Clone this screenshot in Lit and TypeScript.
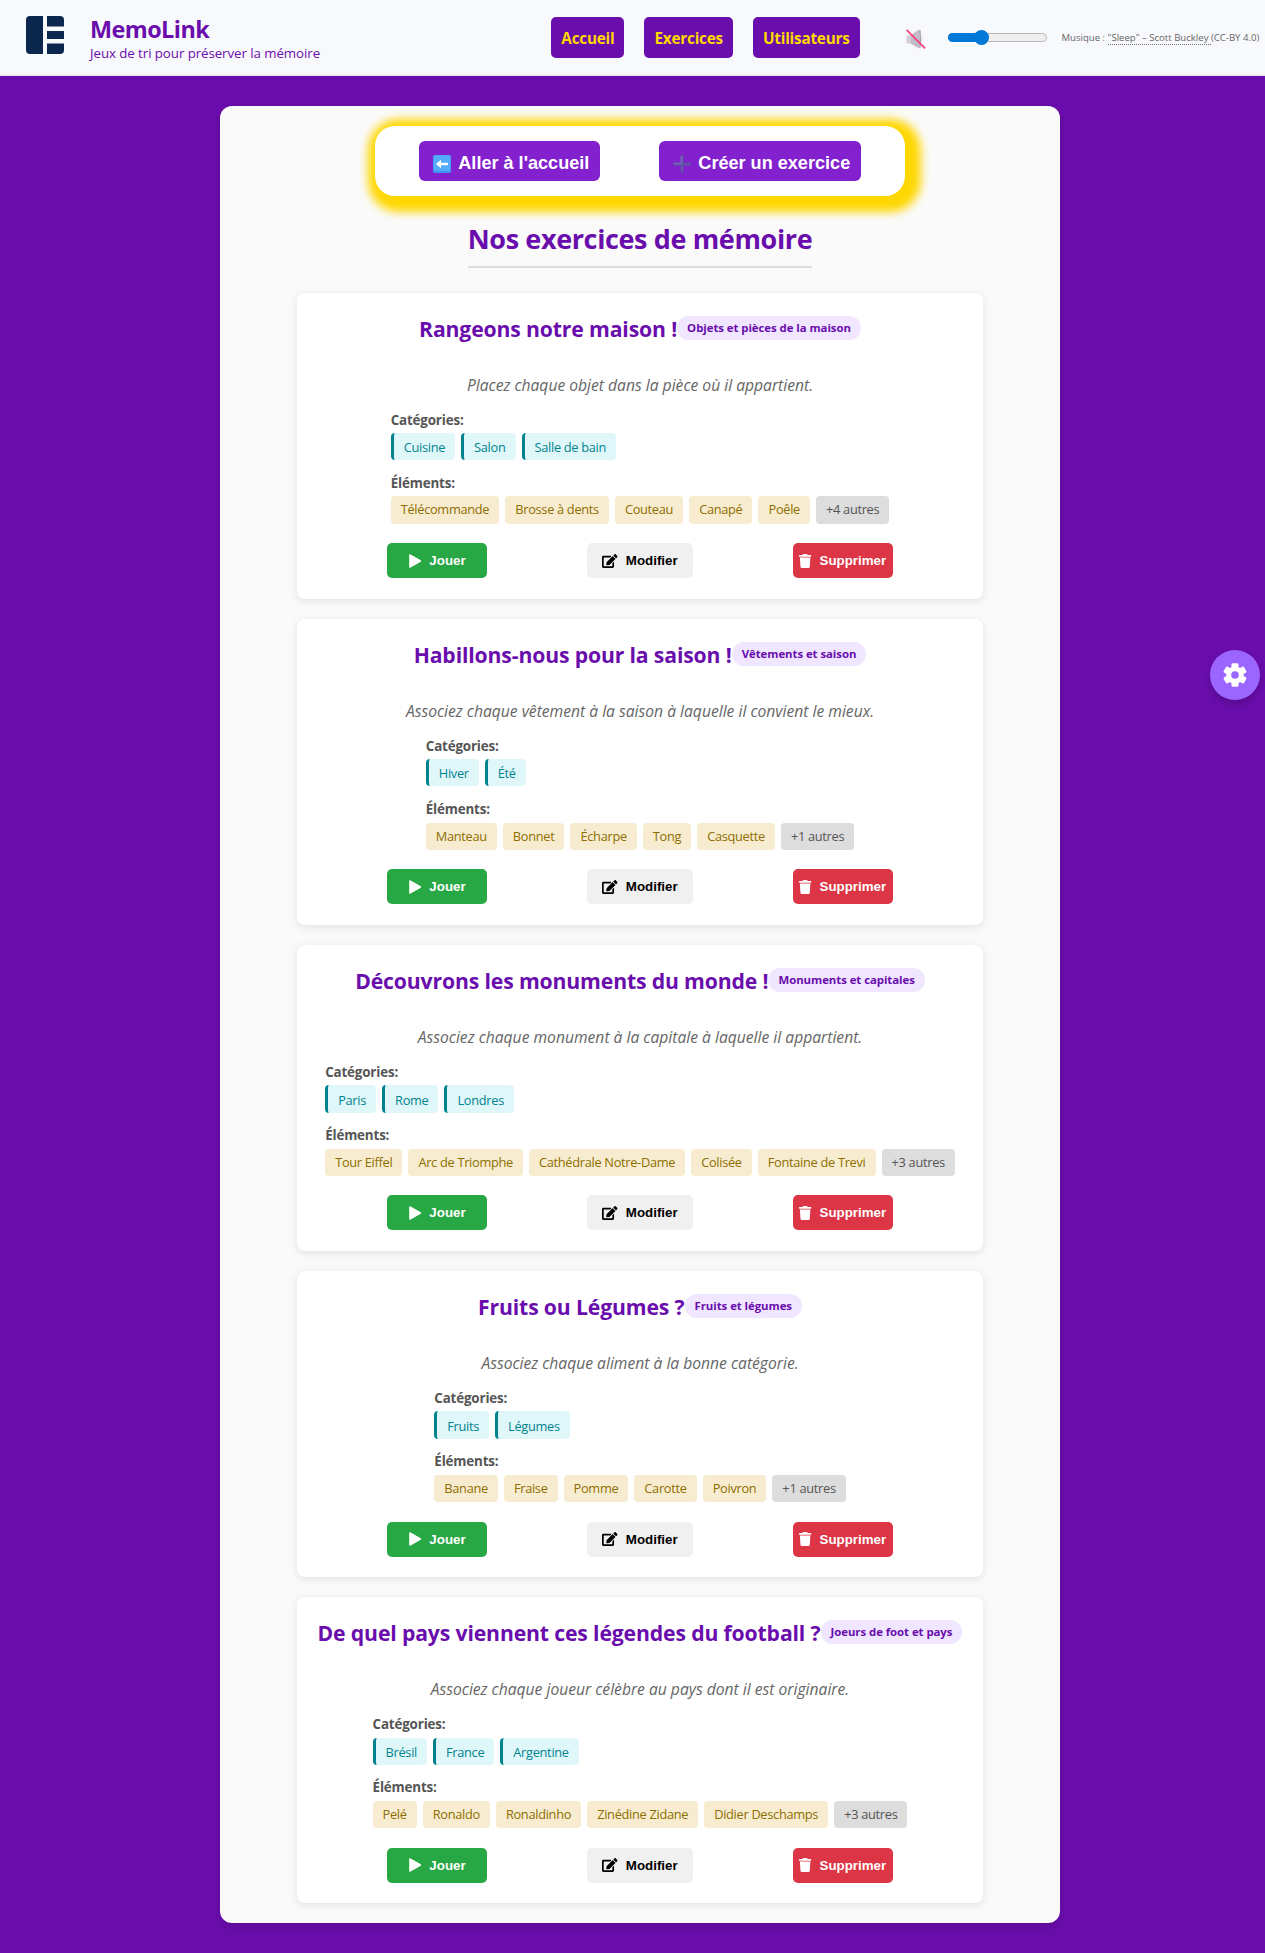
import { LitElement, html, css } from "lit";
import { customElement, property } from "lit/decorators.js";

interface Exercise {
  title: string;
  theme: string;
  description: string;
  categories: string[];
  items: string[];
  more: number;
}

const EXERCISES: Exercise[] = [
  {
    title: "Rangeons notre maison !",
    theme: "Objets et pièces de la maison",
    description: "Placez chaque objet dans la pièce où il appartient.",
    categories: ["Cuisine", "Salon", "Salle de bain"],
    items: ["Télécommande", "Brosse à dents", "Couteau", "Canapé", "Poêle"],
    more: 4,
  },
  {
    title: "Habillons-nous pour la saison !",
    theme: "Vêtements et saison",
    description: "Associez chaque vêtement à la saison à laquelle il convient le mieux.",
    categories: ["Hiver", "Été"],
    items: ["Manteau", "Bonnet", "Écharpe", "Tong", "Casquette"],
    more: 1,
  },
  {
    title: "Découvrons les monuments du monde !",
    theme: "Monuments et capitales",
    description: "Associez chaque monument à la capitale à laquelle il appartient.",
    categories: ["Paris", "Rome", "Londres"],
    items: ["Tour Eiffel", "Arc de Triomphe", "Cathédrale Notre-Dame", "Colisée", "Fontaine de Trevi"],
    more: 3,
  },
  {
    title: "Fruits ou Légumes ?",
    theme: "Fruits et légumes",
    description: "Associez chaque aliment à la bonne catégorie.",
    categories: ["Fruits", "Légumes"],
    items: ["Banane", "Fraise", "Pomme", "Carotte", "Poivron"],
    more: 1,
  },
  {
    title: "De quel pays viennent ces légendes du football ?",
    theme: "Joeurs de foot et pays",
    description: "Associez chaque joueur célèbre au pays dont il est originaire.",
    categories: ["Brésil", "France", "Argentine"],
    items: ["Pelé", "Ronaldo", "Ronaldinho", "Zinédine Zidane", "Didier Deschamps"],
    more: 3,
  },
];

const logoIcon = html`<svg class="logo" width="38" height="38" viewBox="0 0 38 38" fill="#0c274e">
  <path d="M4 0H17V38H4a4 4 0 0 1-4-4V4a4 4 0 0 1 4-4Z"/>
  <path d="M21 0H34a4 4 0 0 1 4 4V10.5H21Z"/>
  <path d="M21 15H38V23H21Z"/>
  <path d="M21 27.500H38V34a4 4 0 0 1-4 4H21Z"/>
</svg>`;

const mutedIcon = html`<svg class="muted" width="20" height="20" viewBox="0 0 20 20">
  <path d="M.5 6.5 5 6 13 .8 14.5 1V19l-1.500.2L5 14.800.5 14.300Z" fill="#d3ccd8"/>
  <path d="M5 6 13 .8V19.200L5 14.800Z" fill="#c3bbca"/>
  <path d="M14.500 1.500Q16 10 14.500 18.500L13.500 19V1Z" fill="#aaa3b0"/>
  <path d="M15.500 7Q17.800 10 15.500 13Z" fill="#ddd6e2"/>
  <path d="M.6.9 19.100 19.400" stroke="#f8417a" stroke-width="1.700"/>
</svg>`;

const backIcon = html`<svg width="18" height="18" viewBox="0 0 18 18">
  <rect width="18" height="18" rx="1.800" fill="#3d94ee"/>
  <rect x=".6" y=".3" width="16.800" height="15.500" rx="1.500" fill="#55aafa"/>
  <path d="M3 9 8 4.800V7.800H15V10.200H8V13.200Z" fill="#fff"/>
</svg>`;

const plusIcon = html`<svg width="18" height="18" viewBox="0 0 18 18">
  <path d="M7.700.3H10.400V7.700H17.700V10.400H10.400V17.700H7.700V10.400H.3V7.700H7.700Z" fill="#6155a5"/>
  <path d="M8.200.8V8.300H.8" fill="none" stroke="#8479bd" stroke-width=".9"/>
</svg>`;

const playIcon = html`<svg width="12.500" height="14" viewBox="0 0 12.500 14">
  <path d="M1.200.3Q.2-.2.200 1V13Q.2 14.200 1.200 13.700L11.800 7.700Q12.700 7 11.800 6.300Z" fill="currentColor"/>
</svg>`;

const editIcon = html`<svg width="15.500" height="14" viewBox="0 0 576 512" fill="currentColor">
  <path d="M402.600 83.200l90.200 90.200c3.800 3.800 3.800 10 0 13.800L274.400 405.600l-92.800 10.300c-12.400 1.400-22.900-9.100-21.500-21.500l10.300-92.800L388.800 83.200c3.800-3.800 10-3.800 13.800 0zm162-22.900l-48.800-48.800c-15.200-15.200-39.900-15.200-55.200 0l-35.400 35.400c-3.800 3.800-3.800 10 0 13.800l90.200 90.200c3.800 3.800 10 3.800 13.800 0l35.400-35.400c15.200-15.300 15.200-40 0-55.200zM384 346.200V448H64V128h229.800c3.200 0 6.200-1.300 8.500-3.500l40-40c7.600-7.600 2.200-20.500-8.500-20.500H48C21.500 64 0 85.500 0 112v352c0 26.500 21.500 48 48 48h352c26.500 0 48-21.500 48-48V306.200c0-10.700-12.900-16-20.500-8.500l-40 40c-2.200 2.300-3.500 5.300-3.500 8.500z"/>
</svg>`;

const trashIcon = html`<svg width="12.250" height="14" viewBox="0 0 448 512" fill="currentColor">
  <path d="M432 32H312l-9.400-18.700A24 24 0 0 0 281.100 0H166.800a23.700 23.700 0 0 0-21.400 13.300L136 32H16A16 16 0 0 0 0 48v32a16 16 0 0 0 16 16h416a16 16 0 0 0 16-16V48a16 16 0 0 0-16-16zM53.200 467a48 48 0 0 0 47.900 45h245.800a48 48 0 0 0 47.900-45L416 128H32z"/>
</svg>`;

const gearIcon = html`<svg width="24" height="24" viewBox="-12 -12 24 24" fill="#fff">
  <circle r="8.700"/>
  <rect x="-3.500" y="-11.800" width="7" height="23.600" rx="1.400"/>
  <rect x="-3.500" y="-11.800" width="7" height="23.600" rx="1.400" transform="rotate(60)"/>
  <rect x="-3.500" y="-11.800" width="7" height="23.600" rx="1.400" transform="rotate(120)"/>
  <circle r="3.800" fill="#9b66ff"/>
</svg>`;

@customElement("exercise-card")
export class ExerciseCard extends LitElement {
  @property({ attribute: false }) exercise!: Exercise;

  static styles = css`
    :host {
      display: flex;
      flex-direction: column;
      align-items: center;
      box-sizing: border-box;
      width: 686px;
      height: 306px;
      padding: 20px 0;
      border-radius: 8px;
      background: #fff;
      box-shadow: 0 2px 8px rgba(0, 0, 0, 0.1);
      white-space: nowrap;
    }
    .head {
      display: flex;
      align-items: flex-start;
      height: 59.7px;
    }
    h3 {
      margin: 0;
      font-size: 21.2px;
      line-height: 31px;
      font-weight: 700;
      letter-spacing: -0.145px;
      color: #6a0dad;
    }
    .theme {
      margin-top: 2.7px;
      padding: 0 10px;
      border-radius: 12px;
      background: #f0e6ff;
      color: #6a0dad;
      font-size: 11.4px;
      font-weight: 700;
      letter-spacing: -0.05px;
      line-height: 24px;
    }
    .description {
      margin: 0;
      font-size: 15.65px;
      font-style: italic;
      line-height: 24px;
      color: #666;
    }
    .lists {
      display: flex;
      flex-direction: column;
      margin-top: 14px;
    }
    .label {
      font-size: 13.4px;
      font-weight: 700;
      letter-spacing: -0.17px;
      line-height: 19px;
      color: #555;
    }
    .tags {
      display: flex;
      gap: 6px;
      margin: 3.5px 0 13.6px;
    }
    .tag {
      padding: 0 10px;
      border-radius: 4px;
      font-size: 12.8px;
      letter-spacing: -0.3px;
      line-height: 27.2px;
    }
    .category {
      padding-top: 1.2px;
      border-left: 3px solid #00838f;
      background: #e0f7fa;
      color: #00838f;
      line-height: 26px;
    }
    .item {
      background: #f8ecd0;
      color: #8d6e00;
    }
    .more {
      background: #ddd;
      color: #555;
    }
    .actions {
      display: flex;
      gap: 100px;
      margin-top: 6px;
    }
    button {
      display: flex;
      align-items: center;
      justify-content: center;
      box-sizing: border-box;
      gap: 8px;
      width: 100px;
      height: 35px;
      padding: 0;
      border: 0;
      border-radius: 5px;
      font: 700 13.333px "Liberation Sans", Arial, sans-serif;
      color: #fff;
    }
    .play {
      background: #28a745;
    }
    .edit {
      width: 105.5px;
      background: #f0f0f0;
      color: #000;
    }
    .remove {
      background: #dc3545;
    }
  `;

  render() {
    const e = this.exercise;
    return html`
      <div class="head">
        <h3>${e.title}</h3>
        <span class="theme">${e.theme}</span>
      </div>
      <p class="description">${e.description}</p>
      <div class="lists">
        <span class="label">Catégories:</span>
        <div class="tags">${e.categories.map((c) => html`<span class="tag category">${c}</span>`)}</div>
        <span class="label">Éléments:</span>
        <div class="tags">
          ${e.items.map((i) => html`<span class="tag item">${i}</span>`)}
          <span class="tag more">+${e.more} autres</span>
        </div>
      </div>
      <div class="actions">
        <button class="play">${playIcon}Jouer</button>
        <button class="edit">${editIcon}Modifier</button>
        <button class="remove">${trashIcon}Supprimer</button>
      </div>
    `;
  }
}

@customElement("app-root")
export class AppRoot extends LitElement {
  static styles = css`
    :host {
      display: block;
      position: relative;
      box-sizing: border-box;
      height: 1953px;
      background: #6a0dad;
      font-family: "Open Sans", "Noto Sans", sans-serif;
      white-space: nowrap;
      overflow: hidden;
    }
    header {
      display: flex;
      box-sizing: border-box;
      height: 76px;
      padding-left: 26px;
      background: #f8f9fc;
      border-bottom: 1px solid #e4e0ea;
    }
    .logo {
      margin: 16px 26px 0 0;
      flex: none;
    }
    .brand {
      width: 461.3px;
      flex: none;
      padding-top: 13px;
      color: #6a0dad;
    }
    .brand h1 {
      margin: 0;
      font-size: 23.4px;
      letter-spacing: -0.55px;
      line-height: 32px;
      font-weight: 700;
    }
    .brand p {
      margin: 0;
      font-size: 13.3px;
      letter-spacing: -0.07px;
      line-height: 17.5px;
    }
    nav {
      display: flex;
      gap: 20px;
      padding-top: 16.5px;
      width: 354.7px;
      flex: none;
    }
    nav a {
      box-sizing: border-box;
      height: 41.5px;
      padding: 0 10px;
      border-radius: 5px;
      background: #6a0dad;
      color: #ffd700;
      font-size: 15.3px;
      font-weight: 700;
      letter-spacing: -0.22px;
      line-height: 43px;
    }
    .muted {
      margin-top: 28.5px;
      flex: none;
    }
    .slider {
      display: grid;
      align-items: center;
      width: 99px;
      height: 16px;
      margin: 29.5px 14px 0 22.5px;
      flex: none;
    }
    .track,
    .thumb {
      grid-area: 1 / 1;
      box-sizing: border-box;
    }
    .track {
      height: 9px;
      border: 1px solid #b9b9b9;
      border-radius: 5px;
      background: #efefef;
    }
    .track::before {
      content: "";
      display: block;
      width: 33px;
      height: 9px;
      margin: -1px;
      border-radius: 5px 0 0 5px;
      background: #0078d7;
    }
    .thumb {
      width: 15px;
      height: 15px;
      margin-left: 25.5px;
      border-radius: 50%;
      background: #0078d7;
    }
    .credit {
      padding-top: 29px;
      font-size: 9.58px;
      line-height: 17px;
      color: #666;
    }
    .credit a {
      border-bottom: 1px dotted #777;
      display: inline-block;
      line-height: 11.5px;
    }
    main {
      display: flex;
      flex-direction: column;
      align-items: center;
      box-sizing: border-box;
      width: 840px;
      height: 1817px;
      margin: 30px 0 0 220px;
      padding-top: 20px;
      border-radius: 12px;
      background: #fafafa;
      box-shadow: 0 4px 12px rgba(0, 0, 0, 0.15);
    }
    .toolbar {
      display: flex;
      justify-content: center;
      align-items: center;
      gap: 59.5px;
      box-sizing: border-box;
      width: 530px;
      height: 70px;
      border-radius: 20px;
      background: #fff;
      box-shadow: 4.5px 4.5px 10px 11px #ffd700;
    }
    .toolbar button {
      display: flex;
      align-items: center;
      gap: 7.5px;
      box-sizing: border-box;
      height: 40.5px;
      padding: 5px 10.5px 0 13.5px;
      border: 0;
      border-radius: 6px;
      background: #8421cf;
      color: #fff;
      font: 700 18.1px "Liberation Sans", Arial, sans-serif;
    }
    h2 {
      box-sizing: border-box;
      height: 50px;
      margin: 22px 0 25px;
      border-bottom: 2px solid #ddd;
      color: #6a0dad;
      font-size: 27px;
      letter-spacing: -0.37px;
      line-height: 41px;
      font-weight: 700;
    }
    .list {
      display: flex;
      flex-direction: column;
      gap: 20.1px;
    }
    .settings {
      position: absolute;
      top: 650px;
      right: 5px;
      display: flex;
      align-items: center;
      justify-content: center;
      width: 50px;
      height: 50px;
      padding: 0;
      border: 0;
      border-radius: 50%;
      background: #9b66ff;
      box-shadow: 0 4px 8px rgba(0, 0, 0, 0.2);
    }
  `;

  render() {
    return html`
      <header>
        ${logoIcon}
        <div class="brand">
          <h1>MemoLink</h1>
          <p>Jeux de tri pour préserver la mémoire</p>
        </div>
        <nav><a>Accueil</a><a>Exercices</a><a>Utilisateurs</a></nav>
        ${mutedIcon}
        <div class="slider"><div class="track"></div><div class="thumb"></div></div>
        <div class="credit">Musique : <a>"Sleep" – Scott Buckley&nbsp;</a>(CC-BY 4.0)</div>
      </header>
      <main>
        <div class="toolbar">
          <button>${backIcon}Aller à l'accueil</button>
          <button>${plusIcon}Créer un exercice</button>
        </div>
        <h2>Nos exercices de mémoire</h2>
        <div class="list">
          ${EXERCISES.map((e) => html`<exercise-card .exercise=${e}></exercise-card>`)}
        </div>
      </main>
      <button class="settings">${gearIcon}</button>
    `;
  }
}
